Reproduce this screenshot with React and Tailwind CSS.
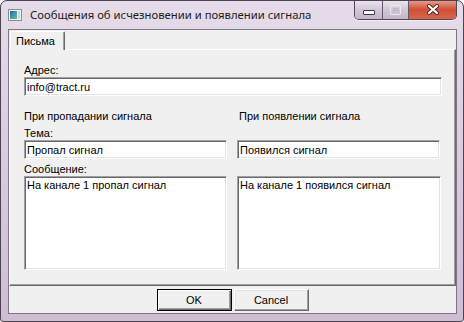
import React from "react";

const sunken =
  "block bg-white border border-t-[#a0a0a0] border-l-[#a0a0a0] border-r-white border-b-white shadow-[inset_1px_1px_0_#696969,inset_-1px_-1px_0_#e3e3e3] outline-none text-black";

function AppIcon() {
  return (
    <svg width="14" height="12" viewBox="0 0 14 12" className="shrink-0">
      <defs>
        <linearGradient id="ig" x1="0" y1="0" x2="1" y2="1">
          <stop offset="0" stopColor="#2f5fae" />
          <stop offset="0.5" stopColor="#3d9bb0" />
          <stop offset="1" stopColor="#6cc07a" />
        </linearGradient>
      </defs>
      <rect x="0.5" y="0.5" width="13" height="11" fill="#f4f4f4" stroke="#8c8c8c" />
      <rect x="2" y="2" width="7" height="8" fill="url(#ig)" />
      <rect x="10" y="2" width="2" height="8" fill="#c9d6df" />
    </svg>
  );
}

function CaptionButtons() {
  return (
    <div className="flex h-[20px] -mt-px border border-[#4f4858] border-t-0 rounded-b-[5px] overflow-hidden shadow-[0_1px_0_rgba(255,255,255,0.6)]">
      <div className="w-[28px] h-full flex items-center justify-center bg-gradient-to-b from-[#ede7ef] via-[#d3c7d8] to-[#c4b5ca] border-r border-[#5f5867]">
        <div className="w-[12px] h-[5px] mt-[5px] bg-white border border-[#3a3a44] rounded-[1px]" />
      </div>
      <div className="w-[26px] h-full flex items-center justify-center bg-gradient-to-b from-[#ede7ef] via-[#d3c7d8] to-[#c4b5ca] border-r border-[#5f5867]">
        <div className="w-[11px] h-[10px] border border-[#f6f2f7] rounded-[1px] flex items-center justify-center opacity-80">
          <div className="w-[5px] h-[3px] border border-[#b9adbe]" />
        </div>
      </div>
      <div className="w-[47px] h-full flex items-center justify-center bg-gradient-to-b from-[#e8a08c] via-[#cf4f36] to-[#d9654a]">
        <svg width="14" height="11" viewBox="0 0 14 11">
          <path d="M3 2 L11 9 M11 2 L3 9" stroke="#4a2a26" strokeWidth="4" strokeLinecap="round" />
          <path d="M3 2 L11 9 M11 2 L3 9" stroke="#ffffff" strokeWidth="2.2" strokeLinecap="round" />
        </svg>
      </div>
    </div>
  );
}

export default function App() {
  return (
    <div className="w-[464px] h-[322px] flex flex-col rounded-t-[7px] rounded-b-[3px] border border-[#4a4450] bg-gradient-to-b from-[#e6dce9] via-[#dacbdf] to-[#cfbdd5] overflow-hidden font-['Liberation_Sans',Arial,sans-serif] text-[11px] leading-[13px] text-black">
      {/* title bar */}
      <div className="h-[28px] flex items-start shrink-0">
        <div className="ml-[7px] mt-[8px]">
          <AppIcon />
        </div>
        <div className="ml-[8px] mt-[6px] font-['Noto_Sans',sans-serif] text-[11.3px] leading-[16px] text-[#1b1b1b] whitespace-nowrap">
          Сообщения об исчезновении и появлении сигнала
        </div>
        <div className="ml-auto mr-[6px]">
          <CaptionButtons />
        </div>
      </div>

      {/* client */}
      <div className="flex-1 ml-[7px] mr-[6px] mb-[7px] border border-[#7d7785] bg-[#f0f0f0] flex flex-col min-h-0">
        <div className="flex mt-px -mb-px relative z-10">
          <div className="ml-px w-[55px] h-[19px] pl-[5px] flex items-center bg-[#f0f0f0] border-t border-l border-r border-t-white border-l-white border-r-[#696969] shadow-[inset_-1px_0_0_#a0a0a0] rounded-t-[2px]">
            Письма
          </div>
        </div>

        <div className="flex-1 border border-t-white border-l-white border-r-[#696969] border-b-[#696969] shadow-[inset_-1px_-1px_0_#a0a0a0] pl-[14px] pt-[14px]">
          <div>Адрес:</div>
          <input readOnly value="info@tract.ru" className={`${sunken} w-[418px] h-[19px] px-[2px]`} />

          <div className="grid grid-cols-[203px_203px] gap-x-[10px] mt-[14px]">
            <div>При пропадании сигнала</div>
            <div className="pl-[2px]">При появлении сигнала</div>

            <div className="mt-[4px]">Тема:</div>
            <div className="mt-[4px]" />

            <input readOnly value="Пропал сигнал" className={`${sunken} w-[203px] h-[19px] px-[2px]`} />
            <input readOnly value="Появился сигнал" className={`${sunken} w-[203px] h-[19px] px-[2px]`} />

            <div className="mt-[4px]">Сообщение:</div>
            <div className="mt-[4px]" />

            <textarea
              readOnly
              value="На канале 1 пропал сигнал"
              className={`${sunken} w-[203px] h-[94px] px-[2px] pt-[2px] pb-0 resize-none leading-[13px]`}
            />
            <textarea
              readOnly
              value="На канале 1 появился сигнал"
              className={`${sunken} w-[204px] h-[94px] px-[2px] pt-[2px] pb-0 resize-none leading-[13px]`}
            />
          </div>
        </div>

        <div className="h-[27px] shrink-0 flex justify-center items-start pt-[3px] gap-[2px]">
          <button className="w-[75px] h-[22px] border border-black bg-[#f0f0f0] shadow-[inset_1px_1px_0_#ffffff,inset_-1px_-1px_0_#696969,inset_-2px_-2px_0_#a0a0a0] text-black">
            OK
          </button>
          <button className="w-[75px] h-[22px] border border-t-white border-l-white border-r-[#696969] border-b-[#696969] bg-[#f0f0f0] shadow-[inset_-1px_-1px_0_#a0a0a0,inset_1px_1px_0_#e3e3e3] text-black">
            Cancel
          </button>
        </div>
      </div>
    </div>
  );
}
